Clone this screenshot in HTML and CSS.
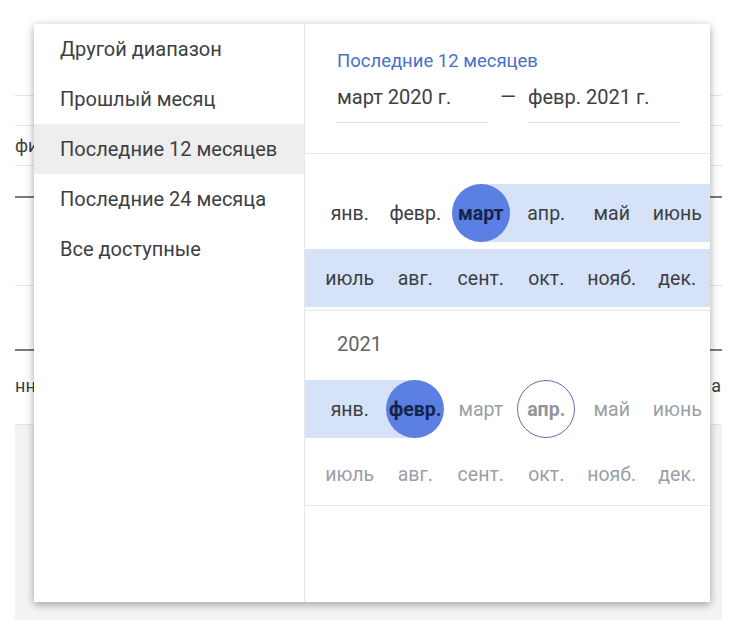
FILE: index.html
```html
<!DOCTYPE html>
<html lang="ru">
<head>
<meta charset="utf-8">
<title>Диапазон дат</title>
<link rel="stylesheet" href="styles.css">
</head>
<body>
<div class="page">
  <div class="bg-row bg-top"></div>
  <div class="bg-row bg-r1"></div>
  <div class="bg-row bg-r2"><span class="clip">фильтр</span></div>
  <div class="bg-row bg-r3"></div>
  <div class="bg-row bg-r4"></div>
  <div class="bg-row bg-r5"></div>
  <div class="bg-row bg-r6"><span class="clip">нн</span><span>а</span></div>
  <div class="bg-gray"></div>

  <div class="popup">
    <ul class="menu">
      <li class="menu-item">Другой диапазон</li>
      <li class="menu-item">Прошлый месяц</li>
      <li class="menu-item active">Последние 12 месяцев</li>
      <li class="menu-item">Последние 24 месяца</li>
      <li class="menu-item">Все доступные</li>
    </ul>
    <div class="panel">
      <div class="head">
        <div class="label">Последние 12 месяцев</div>
        <div class="dates">
          <div class="field">март 2020 г.</div>
          <div class="dash">—</div>
          <div class="field">февр. 2021 г.</div>
        </div>
      </div>
      <div class="year y2020">
        <div class="grid">
          <div class="cell">янв.</div>
          <div class="cell">февр.</div>
          <div class="cell start"><span class="dot sel">март</span></div>
          <div class="cell band"><span class="dot">апр.</span></div>
          <div class="cell band"><span class="dot">май</span></div>
          <div class="cell band"><span class="dot">июнь</span></div>
          <div class="cell band"><span class="dot">июль</span></div>
          <div class="cell band"><span class="dot">авг.</span></div>
          <div class="cell band"><span class="dot">сент.</span></div>
          <div class="cell band"><span class="dot">окт.</span></div>
          <div class="cell band"><span class="dot">нояб.</span></div>
          <div class="cell band"><span class="dot">дек.</span></div>
        </div>
      </div>
      <div class="year y2021">
        <div class="year-label">2021</div>
        <div class="grid">
          <div class="cell band"><span class="dot">янв.</span></div>
          <div class="cell end"><span class="dot sel">февр.</span></div>
          <div class="cell muted"><span class="dot">март</span></div>
          <div class="cell muted"><span class="dot today">апр.</span></div>
          <div class="cell muted"><span class="dot">май</span></div>
          <div class="cell muted"><span class="dot">июнь</span></div>
          <div class="cell muted"><span class="dot">июль</span></div>
          <div class="cell muted"><span class="dot">авг.</span></div>
          <div class="cell muted"><span class="dot">сент.</span></div>
          <div class="cell muted"><span class="dot">окт.</span></div>
          <div class="cell muted"><span class="dot">нояб.</span></div>
          <div class="cell muted"><span class="dot">дек.</span></div>
        </div>
      </div>
    </div>
  </div>
</div>
</body>
</html>
```
FILE: styles.css
```css
* { box-sizing: border-box; }
html, body { margin: 0; padding: 0; background: #fff; }
body {
  font-family: Roboto, "Noto Sans", Arial, sans-serif;
  color: #3c4043;
  width: 730px;
  height: 625px;
  overflow: hidden;
}
.page {
  position: relative;
  margin-left: 15px;
  width: 707px;
  height: 625px;
}
.bg-row {
  border-bottom: 1px solid #e4e4e4;
  display: flex;
  justify-content: space-between;
  align-items: center;
  font-size: 18px;
  color: #3c4043;
}
.clip {
  display: block;
  width: 19px;
  overflow: hidden;
  white-space: nowrap;
}
.bg-top { height: 96px; }
.bg-r1 { height: 30px; }
.bg-r2 { height: 40px; }
.bg-r3 { height: 32px; border-bottom: 2px solid #7a7a7a; }
.bg-r4 { height: 88px; }
.bg-r5 { height: 65px; border-bottom: 2px solid #7a7a7a; }
.bg-r6 { height: 74px; padding-right: 1px; padding-bottom: 4px; }
.bg-gray { height: 195px; background: #f1f3f4; }

.popup {
  position: absolute;
  left: 19px;
  top: 24px;
  width: 676px;
  height: 578px;
  background: #fff;
  display: flex;
  box-shadow: 0 3px 8px rgba(0,0,0,0.28), 0 0 10px rgba(0,0,0,0.08);
}
.menu {
  list-style: none;
  margin: 0;
  padding: 0;
  width: 271px;
  border-right: 1px solid #e6e6e6;
}
.menu-item {
  height: 50px;
  line-height: 50px;
  padding-left: 26px;
  font-size: 20px;
  color: #3c4043;
}
.menu-item.active { background: #eeeeee; }

.panel {
  width: 405px;
  display: flex;
  flex-direction: column;
}
.head {
  padding: 26px 0 30px 32px;
  border-bottom: 1px solid #e6e6e6;
}
.label {
  font-size: 18.5px;
  line-height: 22px;
  color: #4a70c8;
}
.dates {
  margin-top: 13px;
  display: flex;
  align-items: flex-start;
}
.field {
  width: 151px;
  height: 38px;
  line-height: 24px;
  font-size: 20px;
  border-bottom: 1px solid #dcdcdc;
  white-space: nowrap;
}
.dash {
  width: 40px;
  text-align: center;
  line-height: 24px;
  font-size: 20px;
}
.year {
  border-bottom: 1px solid #e6e6e6;
  padding-bottom: 3px;
}
.y2020 { padding-top: 30px; }
.y2021 { padding-top: 21px; padding-bottom: 2px; }
.year-label {
  padding-left: 32px;
  font-size: 20px;
  line-height: 24px;
  color: #5f6368;
  margin-bottom: 24px;
}
.grid {
  display: grid;
  grid-template-columns: 77.5px repeat(5, 65.5px);
  row-gap: 7px;
}
.cell {
  height: 58px;
  display: flex;
  align-items: center;
  justify-content: center;
  font-size: 19.5px;
  color: #3c4043;
  white-space: nowrap;
}
.cell:nth-child(6n+1) { padding-left: 12px; }
.cell.band { background: #d6e2f8; }
.cell.start { background: linear-gradient(to right, transparent 50%, #d6e2f8 50%); }
.cell.end { background: linear-gradient(to right, #d6e2f8 50%, transparent 50%); }
.cell.muted { color: #9aa0a6; }
.dot {
  width: 58px;
  height: 58px;
  border-radius: 50%;
  display: flex;
  align-items: center;
  justify-content: center;
  flex: none;
}
.dot.sel {
  background: #5b7fe3;
  color: #15244a;
  font-weight: 700;
}
.dot.today {
  border: 1px solid #5d6fae;
  font-weight: 700;
  color: #8f959b;
}
```
